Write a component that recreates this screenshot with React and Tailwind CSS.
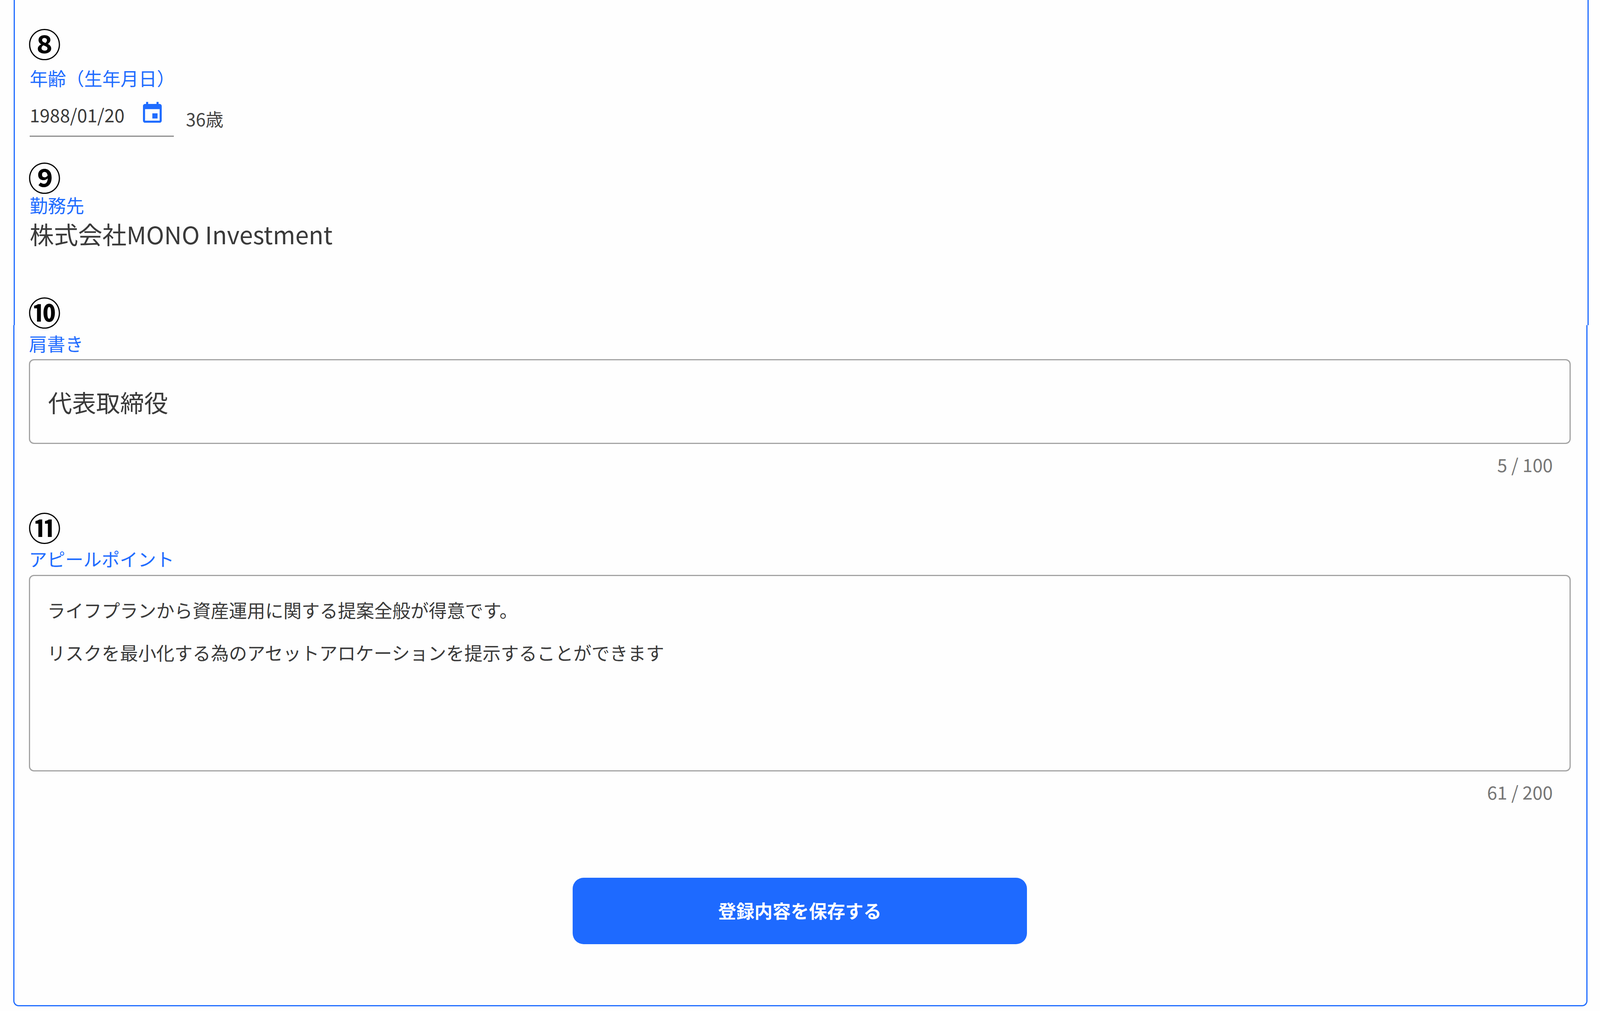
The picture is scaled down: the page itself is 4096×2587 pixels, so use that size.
const font = { fontFamily: '"Noto Sans CJK JP", "Noto Sans", sans-serif' };

function Circled({ children, className = "" }) {
  return (
    <div className={`flex items-start font-bold text-black text-[84px] ${className}`}>
      <span className="block -ml-[4px] -mt-[2px] leading-[72px]">{children}</span>
    </div>
  );
}

function Label({ children, className = "" }) {
  return <div className={`h-[44px] flex items-center text-[46.5px] leading-none text-[#1f6cff] ${className}`}>{children}</div>;
}

function Counter({ children, className = "" }) {
  return <div className={`h-[44px] flex items-center justify-end text-[46.5px] leading-none text-[#767676] ${className}`}>{children}</div>;
}

export default function App() {
  return (
    <div className="w-[4096px] h-[2587px] bg-[#fefefe] overflow-hidden" style={font}>
      <section className="ml-[35px] w-[4032px] h-[832px] border-x-[3px] border-[#1f6cff] pt-[76px] pl-[38px]">
        <Circled className="h-[77px]">⑧</Circled>
        <Label className="mt-[24px]">年齢（生年月日）</Label>
        <div className="flex items-start mt-[29px]">
          <div className="w-[369px] h-[100px] border-b-[3px] border-[#8c8c8c] flex items-start">
            <span className="mt-[21px] text-[46.5px] leading-[44px] text-[#3a3a3a]">1988/01/20</span>
            <svg viewBox="0 0 24 24" className="ml-[39px] mt-[8px] w-[64px] h-[64px] fill-[#1f6cff]">
              <path d="M17 12h-5v5h5v-5zM16 1v2H8V1H6v2H5c-1.11 0-1.99.9-1.99 2L3 19c0 1.1.89 2 2 2h14c1.1 0 2-.9 2-2V5c0-1.1-.9-2-2-2h-1V1h-2zm3 18H5V8h14v11z" />
            </svg>
          </div>
          <span className="ml-[31px] mt-[31px] text-[45.5px] leading-[44px] text-[#444444]">36歳</span>
        </div>
        <Circled className="h-[76px] mt-[68px]">⑨</Circled>
        <Label className="mt-[8px]">勤務先</Label>
        <div className="mt-[21px] h-[62px] flex items-center text-[62px] leading-none text-[#3a3a3a]">株式会社MONO Investment</div>
        <Circled className="h-[78px] mt-[134px]">⑩</Circled>
      </section>

      <section className="ml-[34px] w-[4030px] h-[1743px] border-x-[3px] border-b-[3px] border-[#1f6cff] rounded-b-[14px] pt-[24px] pl-[37px] pr-[40px]">
        <Label>肩書き</Label>
        <div className="mt-[19px] h-[217px] border-[3px] border-[#a3a3a3] rounded-[13px] flex items-center pl-[46px] pt-[3px] text-[61.5px] leading-none text-[#3a3a3a]">代表取締役</div>
        <Counter className="mt-[30px] pr-[46px]">5 / 100</Counter>
        <Circled className="h-[77px] mt-[104px] ml-[2px]">⑪</Circled>
        <Label className="mt-[16px]">アピールポイント</Label>
        <div className="mt-[20px] h-[503px] border-[3px] border-[#a3a3a3] rounded-[13px] pt-[31px] pl-[44px] text-[46.5px] leading-[109px] text-[#3a3a3a]">
          <p>ライフプランから資産運用に関する提案全般が得意です。</p>
          <p>リスクを最小化する為のアセットアロケーションを提示することができます</p>
        </div>
        <Counter className="mt-[30px] pr-[46px]">61 / 200</Counter>
        <div className="mt-[198px] flex justify-center">
          <button className="w-[1163px] h-[170px] rounded-[28px] bg-[#1e6aff] pb-[3px] text-white text-[46.5px] font-bold leading-none">登録内容を保存する</button>
        </div>
      </section>
    </div>
  );
}
